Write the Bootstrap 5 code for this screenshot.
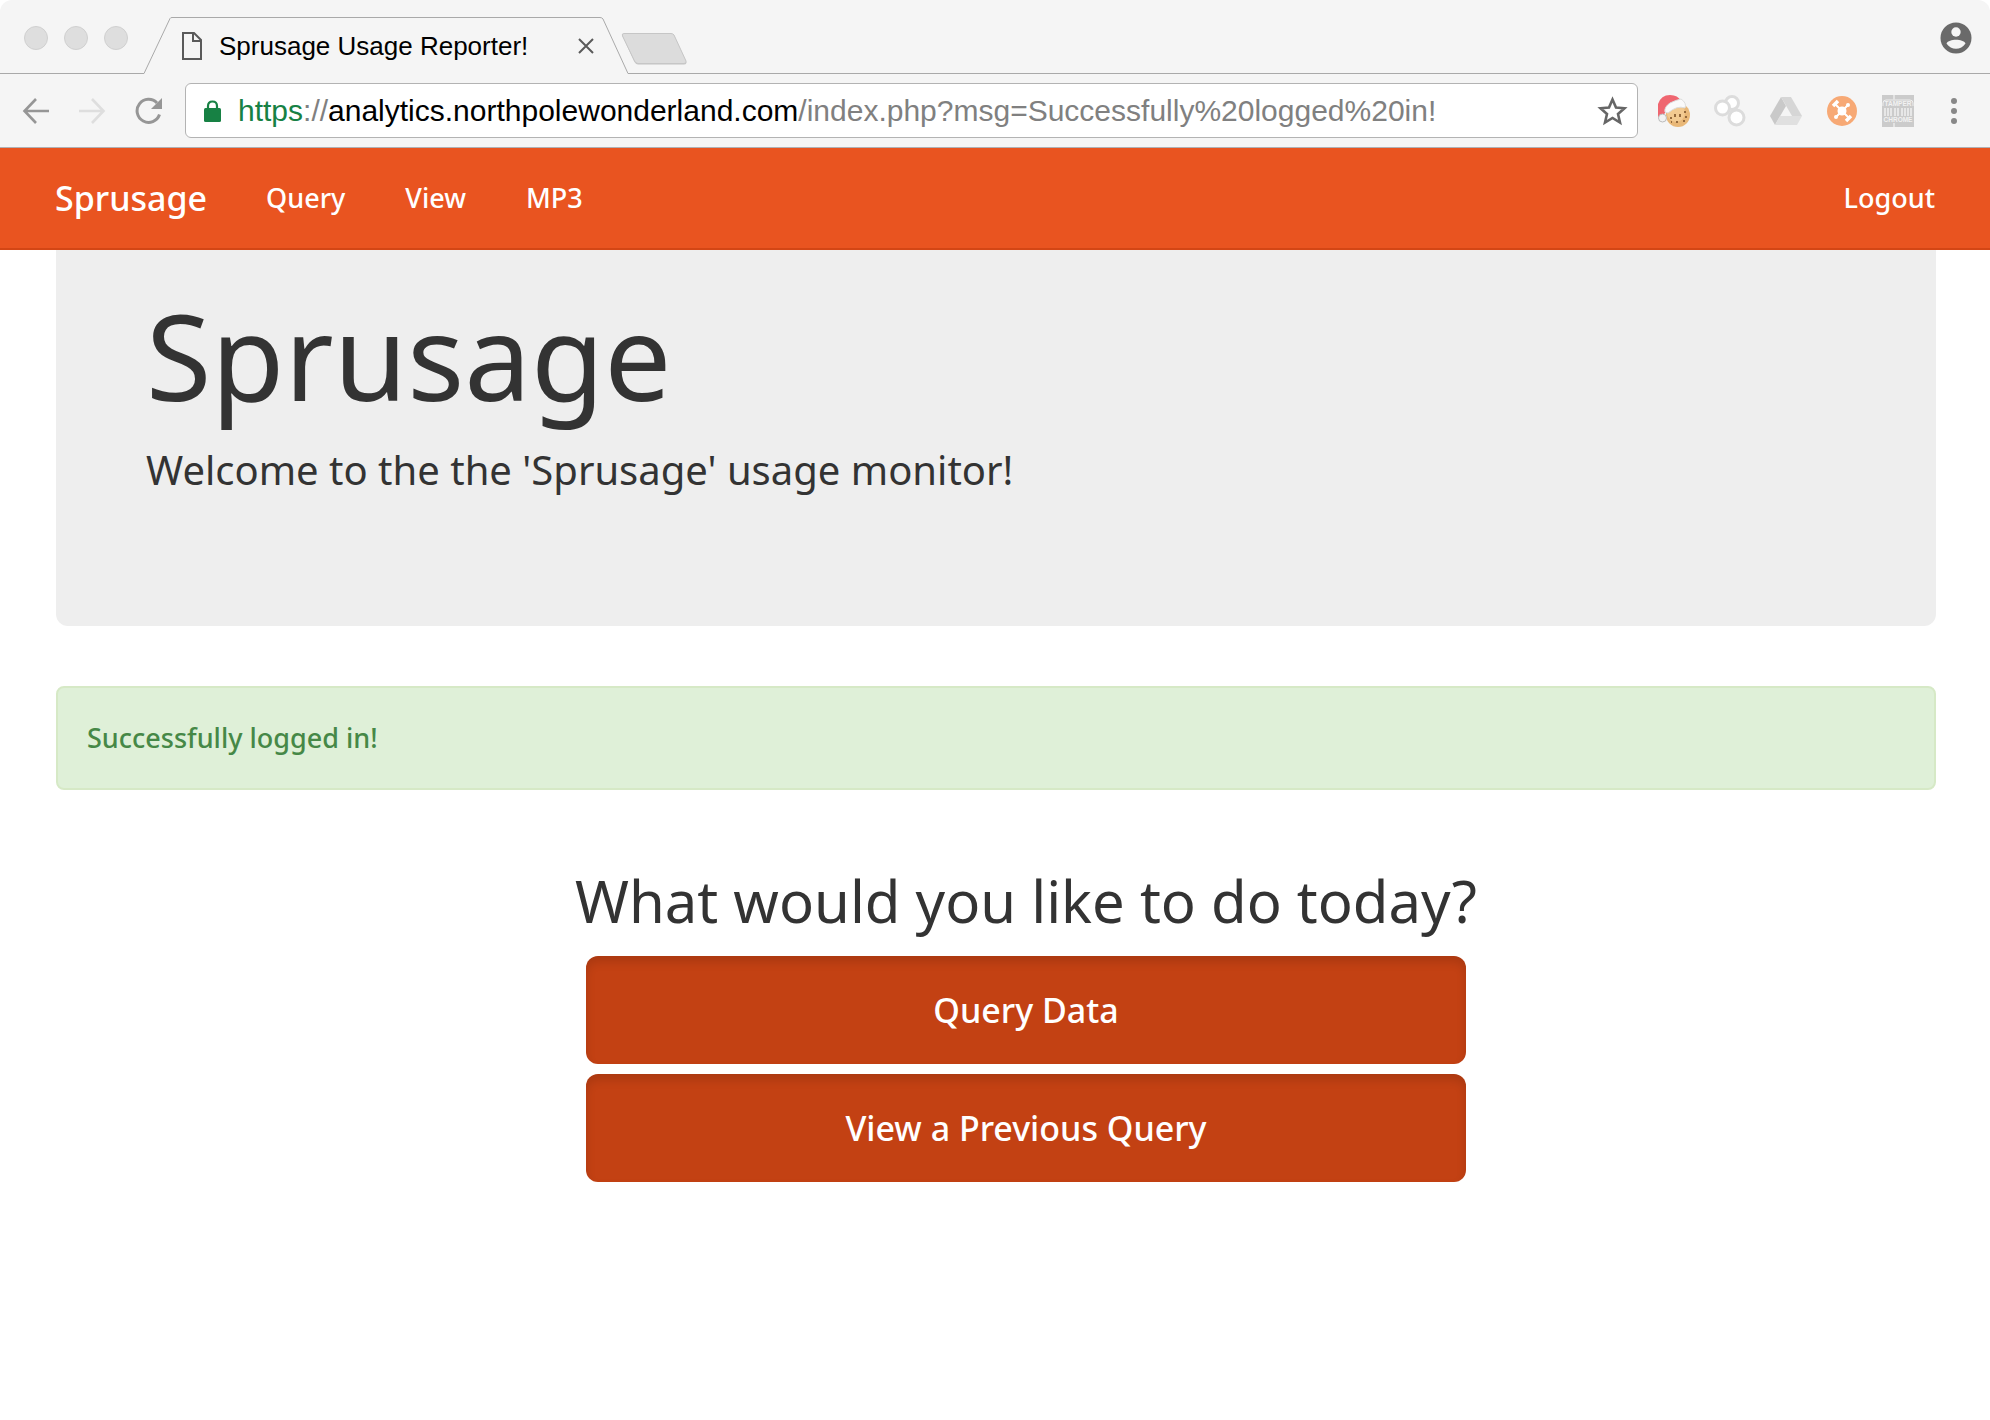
<!DOCTYPE html>
<html lang="en">
<head>
<meta charset="utf-8">
<meta name="viewport" content="width=device-width, initial-scale=1">
<title>Sprusage Usage Reporter!</title>
<link href="https://cdn.jsdelivr.net/npm/bootstrap@5.3.0/dist/css/bootstrap.min.css" rel="stylesheet">
<style>
  body { font-family: "Noto Sans", sans-serif; color: #333; background: #fff; }
  svg { display: block; flex: none; }
  .browser { font-family: "Liberation Sans", Arial, sans-serif; background: #f5f5f5; border-radius: 12px 12px 0 0; border-bottom: 1px solid #b0b0b4; }
  .tabstrip { height: 74px; }
  .strip-line { border-bottom: 1px solid #a9a9a9; }
  .lights { width: 144px; padding: 26px 0 0 24px; gap: 16px; }
  .light { width: 24px; height: 24px; border-radius: 50%; background: #dedede; border: 1px solid #d0d0d0; }
  .tab-shape { width: 484px; height: 74px; }
  .tab-shape > svg { position: absolute; inset: 0; }
  .tab-face { position: relative; padding: 18px 34px 0 38px; height: 74px; }
  .tab-title { font-size: 26px; line-height: 30px; color: #000; margin-left: 17px; }
  .plain { background: none; border: 0; padding: 0; }
  .new-tab { padding: 32px 0 0 0; margin-left: -8px; position: relative; }
  .profile { padding: 22px 18px 0 0; }
  .toolbar { height: 73px; padding: 0 20px 0 22px; }
  .nav-icons { gap: 28px; margin-right: 21px; }
  .address { height: 55px; background: #fff; border: 1px solid #b3b3b3; border-radius: 6px; padding: 0 9px 0 18px; }
  .url { font-size: 30px; line-height: 34px; color: #808080; margin-left: 17px; outline: 0; white-space: nowrap; overflow: hidden; }
  .url .secure { color: #178144; }
  .url .host { color: #000; }
  .extensions { gap: 24px; margin-left: 20px; }
  .site-nav { background: #e95420; border-bottom: 2px solid #d34615; height: 102px; padding: 0 55px; }
  .site-nav .navbar-brand { font-size: 34px; line-height: 46px; color: #fff; padding: 0; margin: 0; font-weight: 500; }
  .site-nav .navbar-nav .nav-link { font-size: 27px; line-height: 38px; color: #fff; padding: 0; font-weight: 500; }
  .site-nav .menu { gap: 60px; margin-left: 59px; }
  .page { padding: 0 54px 0 56px; }
  .hero { background: #eee; border-radius: 0 0 12px 12px; padding: 37px 90px 126px; margin-bottom: 60px; }
  .hero h1 { font-size: 119px; line-height: 136px; font-weight: 400; margin: 0; }
  .hero p { font-size: 40px; line-height: 60px; margin: 17px 0 0; }
  .notice { background: #dff0d8; border: 2px solid #d6e9c6; color: #468847; border-radius: 8px; padding: 31px 28px 31px 29px; font-size: 27px; line-height: 38px; margin: 0 0 73px; font-weight: 500; }
  .choices { padding-left: 60px; }
  .choices h2 { font-size: 58px; line-height: 76px; font-weight: 400; margin: 0 0 17px; }
  .stack { width: 880px; max-width: 100%; gap: 10px; }
  .choice { background: #c34113; color: #fff; border: 0; border-radius: 12px; padding: 30px; font-size: 34px; line-height: 48px; font-weight: 500; box-shadow: inset 0 6px 10px rgba(0,0,0,.125); }
  .choice:hover { background: #b03a10; color: #fff; }
</style>
<script src="https://cdn.jsdelivr.net/npm/bootstrap@5.3.0/dist/js/bootstrap.bundle.min.js"></script>
</head>
<body>
<header class="browser">
  <div class="tabstrip d-flex">
    <div class="lights strip-line d-flex"><span class="light"></span><span class="light"></span><span class="light"></span></div>
    <div class="tab-shape position-relative flex-shrink-0">
      <svg width="484" height="74" viewBox="0 0 484 74" fill="none" stroke="#a9a9a9" aria-hidden="true"><path d="M0 73.500 L26 18.500 Q26.500 17.500 28 17.500 H456 Q458 17.500 459 19 L484 73.500"/></svg>
      <div class="tab-face d-flex align-items-center">
        <svg width="20" height="28" viewBox="0 0 20 28" fill="none" stroke="#5a5a5a" stroke-width="2" aria-hidden="true"><path d="M1 1H12L19 8V27H1Z M11 1V9H19"/></svg>
        <span class="tab-title">Sprusage Usage Reporter!</span>
        <button class="plain ms-auto" type="button" aria-label="Close tab"><svg width="16" height="16" viewBox="0 0 16 16" stroke="#5a5a5a" stroke-width="2"><path d="M1 1L15 15M15 1L1 15"/></svg></button>
      </div>
    </div>
    <div class="strip-line d-flex align-items-start flex-grow-1">
      <button class="plain new-tab" type="button" aria-label="New tab"><svg width="68" height="34" viewBox="0 0 68 34"><path d="M3 2H51Q53 2 54 4L66 30Q67 32.500 64 32.500H18Q16 32.500 14.500 30L2.500 4Q1.500 2 3 2Z" fill="#c4c4c4"/><path d="M4 1.500H51Q53 1.500 54 3L66 29Q67 31.500 64 31.500H18Q16 31.500 14.500 29L2.500 4Q1.500 1.500 4 1.500Z" fill="#dcdcdc" stroke="#c6c6c6"/></svg></button>
      <button class="plain profile ms-auto" type="button" aria-label="Profile"><svg width="32" height="32" viewBox="0 0 32 32"><circle cx="16" cy="16" r="15.500" fill="#6a6a6a"/><circle cx="16" cy="10" r="4.700" fill="#f5f5f5"/><path d="M6.500 21.500C9 16.500 23 16.500 25.500 21.500C21 28.500 11 28.500 6.500 21.500Z" fill="#f5f5f5"/></svg></button>
    </div>
  </div>
  <div class="toolbar d-flex align-items-center">
    <div class="nav-icons d-flex align-items-center">
      <button class="plain" type="button" aria-label="Back"><svg width="28" height="28" viewBox="0 0 28 28" fill="none" stroke="#969696" stroke-width="2.600"><path d="M27 14H3M14 2L2.500 14L14 26"/></svg></button>
      <button class="plain" type="button" aria-label="Forward"><svg width="28" height="28" viewBox="0 0 28 28" fill="none" stroke="#dedede" stroke-width="2.600"><path d="M1 14H25M14 2L25.500 14L14 26"/></svg></button>
      <button class="plain" type="button" aria-label="Reload"><svg width="30" height="28" viewBox="0 0 30 28"><path d="M25.500 17.500A11.500 11.500 0 1 1 23 6" fill="none" stroke="#969696" stroke-width="3"/><path d="M28 1V12H17Z" fill="#969696"/></svg></button>
    </div>
    <div class="address d-flex align-items-center flex-grow-1">
      <svg width="17" height="22" viewBox="0 0 17 22" aria-hidden="true"><path d="M4 9V6Q4 1.500 8.500 1.500T13 6V9" fill="none" stroke="#178144" stroke-width="2.200"/><rect y="8" width="17" height="14" rx="1.500" fill="#178144"/></svg>
      <div class="url" role="textbox" aria-label="Address" contenteditable="true" spellcheck="false"><span class="secure">https</span>://<span class="host">analytics.northpolewonderland.com</span>/index.php?msg=Successfully%20logged%20in!</div>
      <button class="plain ms-auto" type="button" aria-label="Bookmark this page"><svg width="31" height="30" viewBox="0 0 31 30"><path d="M15.500 3.500L19 11.500L27.500 12.300L21 18L23 26.500L15.500 22L8 26.500L10 18L3.500 12.300L12 11.500Z" fill="none" stroke="#666" stroke-width="2.600"/></svg></button>
    </div>
    <div class="extensions d-flex align-items-center">
      <button class="plain" type="button" aria-label="Cookie editor"><svg width="32" height="32" viewBox="0 0 32 32"><circle cx="20" cy="20" r="12" fill="#e9b878"/><circle cx="18" cy="18" r="9" fill="#f2ca91"/><path d="M17 19v3M22 19v3M12 23h2M26 17h2M18 27h2M25 26h2M27 22h2M13 27h1" stroke="#94693c" stroke-width="2"/><path d="M0 22V9Q3 0 12 0Q20 0 23 6L8 16L4 23Z" fill="#ef6670"/><path d="M7 17Q6 12 12 8Q18 5 23 4Q29 8 27 13Q19 10 10 18Z" fill="#fafafa" stroke="#ddd"/><circle cx="4.500" cy="23" r="4" fill="#f2f2f2" stroke="#bbb"/></svg></button>
      <button class="plain" type="button" aria-label="Bubbles"><svg width="32" height="32" viewBox="0 0 32 32" fill="#fff" stroke="#dcdcdc" stroke-width="3"><circle cx="18" cy="8" r="6.500"/><circle cx="8.500" cy="13" r="7"/><circle cx="22.500" cy="22.500" r="7.500"/></svg></button>
      <button class="plain" type="button" aria-label="Drive"><svg width="32" height="32" viewBox="0 0 32 32"><path d="M11 2L0 21L5 30L16 11Z" fill="#c9c9c9"/><path d="M11 2H21L32 21H22Z" fill="#d6d6d6"/><path d="M10 21H32L27 30H5Z" fill="#e0e0e0"/></svg></button>
      <button class="plain" type="button" aria-label="Hub"><svg width="32" height="32" viewBox="0 0 32 32"><circle cx="16" cy="16" r="15" fill="#f7a975"/><g stroke="#fff" stroke-width="2"><path d="M9 9L23 23M22 10L10 22"/><path d="M7 11L12 6M20 26L25 21" stroke-width="3.500"/></g><g fill="#fff"><circle cx="16" cy="16" r="4.500"/><circle cx="22" cy="10" r="2"/><circle cx="10" cy="22" r="2"/></g></svg></button>
      <button class="plain" type="button" aria-label="Tamper Chrome"><svg width="32" height="32" viewBox="0 0 32 32"><rect width="32" height="32" fill="#cbcbcb"/><path d="M1 11V8Q1 5 4 5H28Q31 5 31 8V11" fill="none" stroke="#eee"/><path d="M3 13V21M6 13V21M9 13V21M13 13V21M16 13V21M20 13V21M23 13V21M26 13V21M29 13V21" stroke="#eee" stroke-width="1.600"/><path d="M12 0V5M12 28V32" stroke="#e3e3e3" stroke-width="2"/><g fill="#f2f2f2" font-family="Liberation Sans" font-weight="700" font-size="6.500" text-anchor="middle"><text x="16" y="11">TAMPER</text><text x="16" y="27">CHROME</text></g></svg></button>
      <button class="plain" type="button" aria-label="Menu"><svg width="32" height="32" viewBox="0 0 32 32" fill="#888"><circle cx="16" cy="6" r="3"/><circle cx="16" cy="16" r="3"/><circle cx="16" cy="26" r="3"/></svg></button>
    </div>
  </div>
</header>
<nav class="navbar navbar-expand site-nav">
  <a class="navbar-brand" href="#">Sprusage</a>
  <ul class="navbar-nav menu">
    <li class="nav-item"><a class="nav-link" href="#">Query</a></li>
    <li class="nav-item"><a class="nav-link" href="#">View</a></li>
    <li class="nav-item"><a class="nav-link" href="#">MP3</a></li>
  </ul>
  <ul class="navbar-nav ms-auto"><li class="nav-item"><a class="nav-link" href="#">Logout</a></li></ul>
</nav>
<main class="page">
  <section class="hero">
    <h1>Sprusage</h1>
    <p>Welcome to the the 'Sprusage' usage monitor!</p>
  </section>
  <div class="alert notice" role="alert">Successfully logged in!</div>
  <section class="choices d-flex flex-column align-items-center">
    <h2>What would you like to do today?</h2>
    <div class="stack d-grid">
      <button class="btn choice" type="button">Query Data</button>
      <button class="btn choice" type="button">View a Previous Query</button>
    </div>
  </section>
</main>
</body>
</html>
